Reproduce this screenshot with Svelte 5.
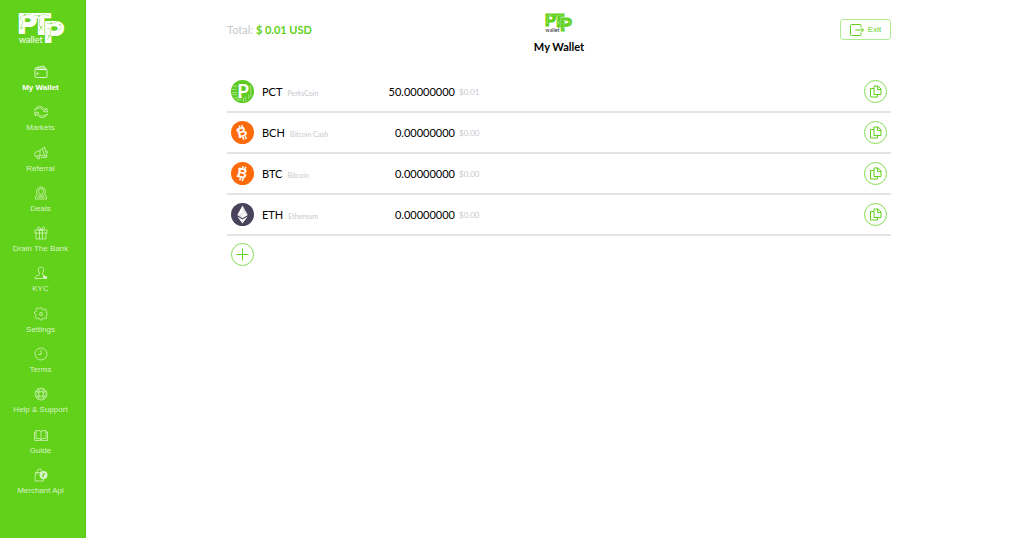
<script>
  const menu = ['My Wallet', 'Markets', 'Referral', 'Deals', 'Drain The Bank', 'KYC', 'Settings', 'Terms', 'Help & Support', 'Guide', 'Merchant Api'];
  const coins = [
    { code: 'PCT', name: 'PerksCoin', amount: '50.00000000', fiat: '$0.01' },
    { code: 'BCH', name: 'Bitcoin Cash', amount: '0.00000000', fiat: '$0.00' },
    { code: 'BTC', name: 'Bitcoin', amount: '0.00000000', fiat: '$0.00' },
    { code: 'ETH', name: 'Ethereum', amount: '0.00000000', fiat: '$0.00' }
  ];
  let active = $state('My Wallet');
</script>

{#snippet logo(fill, line, ink)}
  <svg class="logo" viewBox="0 0 46 34" aria-label="PTP wallet" role="img">
    <text fill={fill} stroke={fill} stroke-width="2" font-family="Liberation Sans" font-weight="700">
      <tspan x="0" y="22" font-size="28">P</tspan><tspan x="14" y="23" font-size="30">T</tspan><tspan x="26" y="31" font-size="30">P</tspan>
    </text>
    <g stroke={line} stroke-width=".5" fill="none" opacity=".8">
      <path d="M2 7l5-4 6 1M2 18l3-7-3-4M16 4l5 1 5-2 5 2M22 7l-1 7 4 6M21 20l4-6M29 12l4 1 6-2M29 18l3-1 1 8M40 20l4-4M29 29l4-5" />
    </g>
    <g fill={line}>
      <circle cx="7" cy="4" r=".8" /><circle cx="4" cy="17" r=".8" /><circle cx="21" cy="5" r=".8" />
      <circle cx="23" cy="16" r=".8" /><circle cx="33" cy="12" r=".8" /><circle cx="31" cy="25" r=".8" /><circle cx="42" cy="14" r=".8" />
    </g>
    <text x="1" y="32" font-family="Lato" font-size="9" fill={ink}>wallet</text>
  </svg>
{/snippet}

{#snippet menuIcon(name)}
  <svg class="icon" viewBox="0 0 28 28" aria-hidden="true">
    {#if name === 'My Wallet'}
      <path d="M2 9v13q0 3 3 3h19q2 0 2-2V11q0-2-2-2H4Q2 9 2 7q0-2 3-2l14-3q2 0 2 3v1H5M6 9h18V6h-3" />
      <circle cx="7" cy="17" r="1.5" />
    {:else if name === 'Markets'}
      <path d="M1 10C5 3 12 1 16 4l8 6 1-4 2 8-8-1 2-2-7-5C10 5 6 7 1 10zM27 18c-4 7-11 9-15 6l-8-6-1 4-2-8 8 1-2 2 7 5c4 1 8-1 13-4z" />
    {:else if name === 'Referral'}
      <path d="M2 13l10-4v10L3 21q-3-4-1-8zM12 9l9-7 5 18-14-1M5 21l3 5 4-1-2-5M17 6l4 14M14 23h11v-3M24 10q4 0 3 4" />
    {:else if name === 'Deals'}
      <circle cx="14" cy="11" r="9" /><path d="M14 5q5 0 5 5 0 6-5 7-5-1-5-7 0-5 5-5zM6 17l-3 5v4h22v-4l-3-5M7 22h14" />
    {:else if name === 'Drain The Bank'}
      <path d="M2 8h24v6H2zM4 14v12h20V14M11 8v18M17 8v18M14 8C6 9 5 2 9 2q3 0 5 6zM14 8c8 1 9-6 5-6q-3 0-5 6z" />
    {:else if name === 'KYC'}
      <path d="M18 25H2q0-4 3-5l6-3v-3C7 9 8 2 14 2s7 7 3 12v3l4 2" />
      <path class="solid" d="M18 19l4 1 4 1v4l-2 1-6-1z" />
    {:else if name === 'Settings'}
      <path d="M12 2h4l1 3 3 1 3-2 2 3-1 3 2 2v4l-2 2 1 3-2 3-3-2-3 1-1 3h-4l-1-3-3-1-3 2-3-3 2-3-1-3-2-2v-3l3-1 1-3-1-3 2-2 3 2 3-1z" />
      <circle cx="14" cy="14" r="3" />
    {:else if name === 'Terms'}
      <circle cx="14" cy="14" r="12" /><path d="M14 6v9H8" />
    {:else if name === 'Help & Support'}
      <circle cx="14" cy="14" r="12" /><circle cx="14" cy="14" r="5" />
      <path d="M8 4l3 6M4 8l6 3M20 4l-3 6M24 8l-6 3M8 24l3-6M4 20l6-3M20 24l-3-6M24 20l-6-3" />
      <circle cx="14" cy="14" r="9" opacity=".5" />
    {:else if name === 'Guide'}
      <path d="M14 7Q11 4 4 5v16q7-1 10 2 3-3 10-2V5q-7-1-10 2v16M4 8H1v17h12l1 1 1-1h12V8h-3" />
    {:else}
      <path d="M6 9H3L2 26h17v-5M6 13V7q1-5 5-5t5 5M6 9h6" />
      <circle class="solid" cx="19" cy="14" r="8" />
      <path class="cut" d="M17 18l4-8M17 11l4 1-5 4 4 1" />
    {/if}
  </svg>
{/snippet}

{#snippet coinIcon(code)}
  <svg class="coin-icon" viewBox="0 0 22 22" aria-hidden="true">
    {#if code === 'PCT'}
      <circle cx="11" cy="11" r="11" fill="#5ccb22" />
      <path d="M2 6h4M1 9h4M1 12h5M1 14h5M3 17h8M5 19h5M12 17v4M14 16v4M18 5l1 3v8M17 14v4" stroke="#d5f6c3" stroke-width=".6" fill="none" />
      <text x="6" y="17" font-family="Lato" font-weight="700" font-size="18" fill="#fff">P</text>
    {:else if code === 'ETH'}
      <circle cx="11" cy="11" r="11" fill="#48435a" />
      <path d="M11 2.5L6 11.5l5 3 5-3zM6 12.8l5 6.8 5-6.8-5 3z" fill="#fff" />
      <path d="M11 2.5v12l5-3zM6 11.5l5-2.3 5 2.3-5 3z" fill="#c6c3d3" opacity=".45" />
    {:else}
      <circle cx="11" cy="11" r="11" fill="#ff6a0b" />
      <g transform={code === 'BCH' ? 'rotate(-18 11 11)' : 'rotate(13 11 11)'}>
        <path d="M10 4v3M12.500 4v3M10 15v3M12.500 15v3M6 7.500h3M6 14.500h3" stroke="#fff" stroke-width="1.500" />
        <text x="6" y="15" font-family="Liberation Sans" font-weight="700" font-size="13" fill="#fff">B</text>
      </g>
    {/if}
  </svg>
{/snippet}

<div class="app">
  <aside>
    <a class="brand" href="#home">{@render logo('#fff', '#61d119', '#fff')}</a>
    <nav>
      {#each menu as item}
        <a href="#{item}" class:active={active === item} onclick={() => (active = item)}>
          {@render menuIcon(item)}
          <span>{item}</span>
        </a>
      {/each}
    </nav>
  </aside>

  <main>
    <header>
      <p class="total">Total: <strong>$ 0.01 USD</strong></p>
      <div class="title">
        {@render logo('#61d119', '#fff', '#222')}
        <h1>My Wallet</h1>
      </div>
      <button class="exit">
        <svg viewBox="0 0 28 24" aria-hidden="true"><path d="M22 6V3q0-2-2-2H3Q1 1 1 3v18q0 2 2 2h17q2 0 2-2v-3M11 12h16M22 7l5 5-5 5" /></svg>
        Exit
      </button>
    </header>

    <table aria-label="Balances">
      <tbody>
        {#each coins as coin}
          <tr>
            <td class="coin">
              <div>
                {@render coinIcon(coin.code)}
                <p>{coin.code}<small>{coin.name}</small></p>
              </div>
            </td>
            <td class="amount">{coin.amount}</td>
            <td class="fiat">{coin.fiat}</td>
            <td class="action">
              <button class="round" aria-label="Copy {coin.code} address">
                <svg viewBox="0 0 26 26" aria-hidden="true"><path d="M10 2h8l6 6v11H10zM17 2v7h7M10 7H3v17h14v-5" /></svg>
              </button>
            </td>
          </tr>
        {/each}
      </tbody>
    </table>
    <button class="round add" aria-label="Add coin">
      <svg viewBox="0 0 26 26" aria-hidden="true"><path d="M13 1v24M1 13h24" /></svg>
    </button>
  </main>
</div>

<style>
  :global(body) { background: #fff; }
  .app { display: flex; min-height: 100vh; font-family: Lato, sans-serif; font-size: 11px; color: #111; }
  svg { display: block; overflow: visible; }
  aside { display: flex; flex-direction: column; flex: 0 0 86px; box-sizing: border-box; padding: 11px 4px 42px 0; border-right: 1px solid #55c414; background: #61d119; }
  .logo { width: 46px; height: 34px; }
  .brand { align-self: center; }
  nav { display: flex; flex: 1; flex-direction: column; justify-content: space-between; padding-top: 20px; }
  nav a { display: flex; flex-direction: column; align-items: center; gap: 4px; color: rgba(255, 255, 255, .76); font: 8px/10px "Liberation Sans", sans-serif; text-decoration: none; }
  nav .active { color: #fff; font-weight: 700; }
  .icon { width: 14px; height: 14px; fill: none; stroke: currentColor; stroke-width: 1.5; }
  .icon .solid { fill: currentColor; stroke: none; }
  .icon .cut { stroke: #61d119; }
  main { flex: 1; padding: 13px 133px 40px 141px; }
  header { display: grid; grid-template-columns: 1fr auto 1fr; align-items: start; height: 59px; }
  .total { margin: 10px 0 0; line-height: 14px; color: #c8c8ce; }
  .total strong { color: #61d119; }
  .title { display: flex; flex-direction: column; align-items: center; gap: 7px; }
  .title .logo { width: 27px; height: 20px; }
  h1 { margin: 0; font-size: 11px; line-height: 14px; color: #000; }
  button { display: flex; align-items: center; justify-content: center; box-sizing: border-box; padding: 0; border: 1px solid #83dc53; background: #fff; color: #61d119; cursor: pointer; }
  button svg { fill: none; stroke: currentColor; }
  .exit { justify-self: end; gap: 4px; width: 51px; height: 21px; margin-top: 6px; border-color: #b0eb91; border-radius: 3px; font: 8px "Liberation Sans", sans-serif; }
  .exit svg { width: 14px; height: 12px; stroke-width: 2; }
  table { width: 100%; table-layout: fixed; border-spacing: 0; }
  td { box-sizing: border-box; height: 41px; padding: 0; border-bottom: 2px solid #e4e4e6; }
  .coin { width: 156px; padding-left: 4px; }
  .coin div { display: flex; align-items: center; gap: 8px; }
  .coin p { margin: 0; white-space: nowrap; color: #000; }
  .coin-icon { width: 23px; height: 23px; }
  small { margin-left: 5px; font-size: 7px; color: #c8c8cc; }
  .amount { width: 72px; text-align: right; color: #000; }
  .fiat { padding-left: 4px; font-size: 8px; color: #c8c8cc; }
  .action { width: 40px; padding-right: 4px; }
  .round { width: 23px; height: 23px; border-radius: 50%; }
  .action .round { margin-left: auto; }
  .round svg { width: 13px; height: 13px; stroke-width: 2; }
  .add { margin: 7px 0 0 4px; }
</style>
